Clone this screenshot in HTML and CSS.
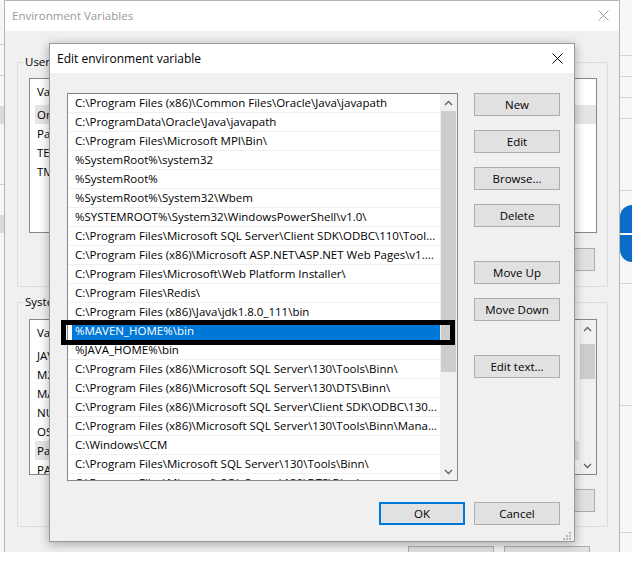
FILE: index.html
```html
<!DOCTYPE html>
<html lang="en">
<head>
<meta charset="utf-8">
<title>Edit environment variable</title>
<link rel="stylesheet" href="styles.css">
</head>
<body>
<div class="desk">
  <div class="bg-left">
    <div class="bl-line"></div><div class="bl-line"></div><div class="bl-box"></div><div class="bl-line"></div><div class="bl-box"></div>
  </div>
  <div class="bg-right">
    <div class="br-line l1"></div>
    <div class="br-line l2"></div>
    <div class="br-line l3"></div>
    <div class="br-line l4"></div>
    <div class="br-line l5"></div>
    <div class="br-blue"><div class="bb-top"></div><div class="bb-bot"></div></div>
    <div class="br-line l6"></div>
    <div class="br-line l7"></div>
    <div class="br-line l8"></div>
  </div>

  <div class="env">
    <div class="env-title">
      <span>Environment Variables</span>
      <svg class="env-x" width="11" height="11" viewBox="0 0 11 11"><path d="M0.5 0.5L10.5 10.5M10.5 0.5L0.5 10.5" stroke="#a0a0a0" stroke-width="1" fill="none"/></svg>
    </div>
    <div class="env-body">
      <fieldset class="grp grp-user">
        <legend>User variables for user</legend>
        <div class="vlist vlist-user">
          <div class="vcols">
            <div class="vhead">Variable</div>
            <div class="vrow hl">OneDrive</div>
            <div class="vrow">Path</div>
            <div class="vrow">TEMP</div>
            <div class="vrow">TMP</div>
          </div>
        </div>
        <div class="grp-btns"><button class="btn">New...</button><button class="btn">Edit...</button><button class="btn">Delete</button></div>
      </fieldset>
      <fieldset class="grp grp-sys">
        <legend>System variables</legend>
        <div class="vlist vlist-sys">
          <div class="vcols">
            <div class="vhead">Variable</div>
            <div class="vrow">JAVA_HOME</div>
            <div class="vrow">M2_HOME</div>
            <div class="vrow">MAVEN_HOME</div>
            <div class="vrow">NUMBER_OF_PROCESSORS</div>
            <div class="vrow">OS</div>
            <div class="vrow hl">Path</div>
            <div class="vrow">PATHEXT</div>
          </div>
          <div class="sbar sbar-sys">
            <div class="sb-btn"><svg width="9" height="6" viewBox="0 0 9 6"><path d="M1 5L4.5 1.5L8 5" stroke="#606060" stroke-width="1.3" fill="none"/></svg></div>
            <div class="sb-track"><div class="sb-thumb sys-thumb"></div></div>
            <div class="sb-btn"><svg width="9" height="6" viewBox="0 0 9 6"><path d="M1 1L4.5 4.5L8 1" stroke="#606060" stroke-width="1.3" fill="none"/></svg></div>
          </div>
        </div>
        <div class="grp-btns"><button class="btn">New...</button><button class="btn">Edit...</button><button class="btn">Delete</button></div>
      </fieldset>
      <div class="env-foot"><button class="btn btn-w">OK</button><button class="btn btn-w">Cancel</button></div>
    </div>
  </div>

  <div class="dlg">
    <div class="dlg-title">
      <span>Edit environment variable</span>
      <svg class="dlg-x" width="11" height="11" viewBox="0 0 11 11"><path d="M0.5 0.5L10.5 10.5M10.5 0.5L0.5 10.5" stroke="#000" stroke-width="1" fill="none"/></svg>
    </div>
    <div class="dlg-body">
      <div class="dlg-main">
        <div class="plist">
          <div class="prows">
            <div class="prow"><span class="ptxt">C:\Program Files (x86)\Common Files\Oracle\Java\javapath</span></div>
            <div class="prow"><span class="ptxt">C:\ProgramData\Oracle\Java\javapath</span></div>
            <div class="prow"><span class="ptxt">C:\Program Files\Microsoft MPI\Bin\</span></div>
            <div class="prow"><span class="ptxt">%SystemRoot%\system32</span></div>
            <div class="prow"><span class="ptxt">%SystemRoot%</span></div>
            <div class="prow"><span class="ptxt">%SystemRoot%\System32\Wbem</span></div>
            <div class="prow"><span class="ptxt">%SYSTEMROOT%\System32\WindowsPowerShell\v1.0\</span></div>
            <div class="prow"><span class="ptxt">C:\Program Files\Microsoft SQL Server\Client SDK\ODBC\110\Tool...</span></div>
            <div class="prow"><span class="ptxt">C:\Program Files (x86)\Microsoft ASP.NET\ASP.NET Web Pages\v1....</span></div>
            <div class="prow"><span class="ptxt">C:\Program Files\Microsoft\Web Platform Installer\</span></div>
            <div class="prow"><span class="ptxt">C:\Program Files\Redis\</span></div>
            <div class="prow"><span class="ptxt">C:\Program Files (x86)\Java\jdk1.8.0_111\bin</span></div>
            <div class="prow sel"><span class="ptxt">%MAVEN_HOME%\bin</span></div>
            <div class="prow"><span class="ptxt">%JAVA_HOME%\bin</span></div>
            <div class="prow"><span class="ptxt">C:\Program Files (x86)\Microsoft SQL Server\130\Tools\Binn\</span></div>
            <div class="prow"><span class="ptxt">C:\Program Files (x86)\Microsoft SQL Server\130\DTS\Binn\</span></div>
            <div class="prow"><span class="ptxt">C:\Program Files (x86)\Microsoft SQL Server\Client SDK\ODBC\130...</span></div>
            <div class="prow"><span class="ptxt">C:\Program Files (x86)\Microsoft SQL Server\130\Tools\Binn\Mana...</span></div>
            <div class="prow"><span class="ptxt">C:\Windows\CCM</span></div>
            <div class="prow"><span class="ptxt">C:\Program Files\Microsoft SQL Server\130\Tools\Binn\</span></div>
            <div class="prow"><span class="ptxt">C:\Program Files\Microsoft SQL Server\130\DTS\Binn\</span></div>
          </div>
          <div class="sbar">
            <div class="sb-btn"><svg width="9" height="6" viewBox="0 0 9 6"><path d="M1 5L4.5 1.5L8 5" stroke="#606060" stroke-width="1.3" fill="none"/></svg></div>
            <div class="sb-track"><div class="sb-thumb main-thumb"></div></div>
            <div class="sb-btn"><svg width="9" height="6" viewBox="0 0 9 6"><path d="M1 1L4.5 4.5L8 1" stroke="#606060" stroke-width="1.3" fill="none"/></svg></div>
          </div>
        </div>
        <div class="btncol">
          <button class="btn btn-w">New</button>
          <button class="btn btn-w gs">Edit</button>
          <button class="btn btn-w gs">Browse...</button>
          <button class="btn btn-w gs">Delete</button>
          <button class="btn btn-w gl">Move Up</button>
          <button class="btn btn-w gs">Move Down</button>
          <button class="btn btn-w gl">Edit text...</button>
        </div>
      </div>
      <div class="dlg-foot">
        <button class="btn btn-w btn-def">OK</button>
        <button class="btn btn-w">Cancel</button>
      </div>
    </div>
    <div class="mark"></div>
    <svg class="grip" width="9" height="9" viewBox="0 0 9 9">
      <rect x="7" y="1" width="2" height="2" fill="#b8b8b8"/>
      <rect x="4" y="4" width="2" height="2" fill="#b8b8b8"/><rect x="7" y="4" width="2" height="2" fill="#b8b8b8"/>
      <rect x="1" y="7" width="2" height="2" fill="#b8b8b8"/><rect x="4" y="7" width="2" height="2" fill="#b8b8b8"/><rect x="7" y="7" width="2" height="2" fill="#b8b8b8"/>
    </svg>
  </div>
</div>
</body>
</html>
```

FILE: styles.css
```css
* { box-sizing: border-box; }
html, body { margin: 0; padding: 0; }
body {
  width: 632px; height: 564px; overflow: hidden; background: #fff;
  font-family: "Open Sans", "Noto Sans", sans-serif; font-size: 11.5px; color: #000;
}
.desk { position: relative; width: 632px; height: 552px; overflow: hidden; }

/* windows behind */
.bg-left { position: absolute; left: 0; top: 0; width: 5px; height: 552px; background: #f6f6f6; padding-top: 44px; }
.bl-line { height: 1px; background: #cfcfcf; margin-bottom: 30px; }
.bl-box { height: 18px; background: #dadada; margin-bottom: 60px; }

.bg-right { position: absolute; left: 619px; top: 0; width: 30px; height: 552px; background: #f7f7f7; }
.br-line { position: absolute; left: 0; right: 0; height: 1px; background: #d6d6d6; }
.l1 { top: 55px; } .l2 { top: 76px; } .l3 { top: 97px; } .l4 { top: 118px; } .l5 { top: 190px; }
.l6 { top: 283px; } .l7 { top: 405px; } .l8 { top: 532px; }
.br-blue { position: absolute; left: 1px; top: 205px; width: 30px; height: 57px; display: flex; flex-direction: column; gap: 2px; }
.bb-top { flex: 1; background: #0a6cc4; border-top-left-radius: 12px; }
.bb-bot { flex: 1; background: #0a6cc4; border-bottom-left-radius: 12px; }

/* Environment Variables window */
.env {
  position: absolute; left: 4px; top: 0; width: 616px; height: 600px;
  border: 1px solid #b5b5b5; background: #f0f0f0; display: flex; flex-direction: column;
}
.env-title {
  height: 30px; flex: none; background: #fff; color: #999;
  display: flex; align-items: center; justify-content: space-between; padding: 0 10px 1px 7px;
}
.env-body { padding: 0 11px 0 12px; display: flex; flex-direction: column; }
.grp { margin: 0; border: 1px solid #dcdcdc; min-width: 0; display: flex; flex-direction: column; }
.grp legend { padding: 0 2px; margin-left: -6px; line-height: 16px; }
.grp-user { margin-top: 23px; padding: 8px 10px 15px 11px; }
.grp-sys { margin-top: 7px; padding: 9px 10px 14px 11px; }
.vlist { background: #fff; border: 1px solid #828790; display: flex; overflow: hidden; }
.vlist-user { height: 155px; }
.vlist-sys { height: 156px; }
.vcols { flex: 1; }
.vhead { height: 26px; line-height: 26px; padding-left: 7px; }
.vrow { height: 19px; line-height: 19px; margin-left: 5px; padding-left: 2px; }
.vrow.hl { background: #e5e5e5; }
.grp-btns { display: flex; justify-content: flex-end; gap: 8px; margin-right: 2px; }
.grp-user .grp-btns { margin-top: 15px; }
.grp-sys .grp-btns { margin-top: 14px; }
.env-foot { display: flex; justify-content: flex-end; gap: 10px; margin-top: 19px; padding-right: 18px; }

.btn {
  font: inherit; color: #000; height: 23px; width: 75px; padding: 0;
  background: #e1e1e1; border: 1px solid #adadad; border-radius: 0;
}
.btn-w { width: 86px; }

/* scrollbars */
.sbar { width: 17px; flex: none; background: #f0f0f0; display: flex; flex-direction: column; }
.sb-btn { height: 17px; flex: none; display: flex; align-items: center; justify-content: center; }
.sb-track { flex: 1; }
.sb-thumb { background: #cdcdcd; margin: 0 1px; }
.sys-thumb { margin-top: 7px; height: 35px; }
.main-thumb { height: 261px; }

/* Edit dialog */
.dlg {
  position: absolute; left: 49px; top: 43px; width: 526px; height: 499px;
  background: #f0f0f0; border: 1px solid #9a9a9a;
  box-shadow: 0 2px 10px rgba(0,0,0,0.32);
  display: flex; flex-direction: column;
}
.dlg-title {
  height: 29px; flex: none; background: #fff; font-size: 12px;
  display: flex; align-items: center; justify-content: space-between; padding: 0 11px 0 7px;
}
.dlg-body { padding: 20px 13px 0 17px; display: flex; flex-direction: column; }
.dlg-main { display: flex; gap: 16px; }
.plist { width: 391px; height: 388px; background: #fff; border: 1px solid #828790; display: flex; overflow: hidden; }
.prows { flex: 1; min-width: 0; }
.prow { height: 19px; border-bottom: 1px solid #f0f0f0; padding-left: 4px; display: flex; white-space: nowrap; overflow: hidden; }
.ptxt { flex: 1; padding-left: 3px; line-height: 18px; }
.prow.sel .ptxt { background: #0078d7; color: #fff; }
.btncol { display: flex; flex-direction: column; }
.gs { margin-top: 14px; }
.gl { margin-top: 34px; }
.dlg-foot { display: flex; justify-content: flex-end; gap: 9px; margin-top: 21px; padding-right: 1px; }
.btn-def { border: 2px solid #0078d7; }

.mark { position: absolute; left: 11px; top: 276px; width: 394px; height: 25px; border: 5px solid #000; }
.grip { position: absolute; right: 3px; bottom: 1px; }
```
